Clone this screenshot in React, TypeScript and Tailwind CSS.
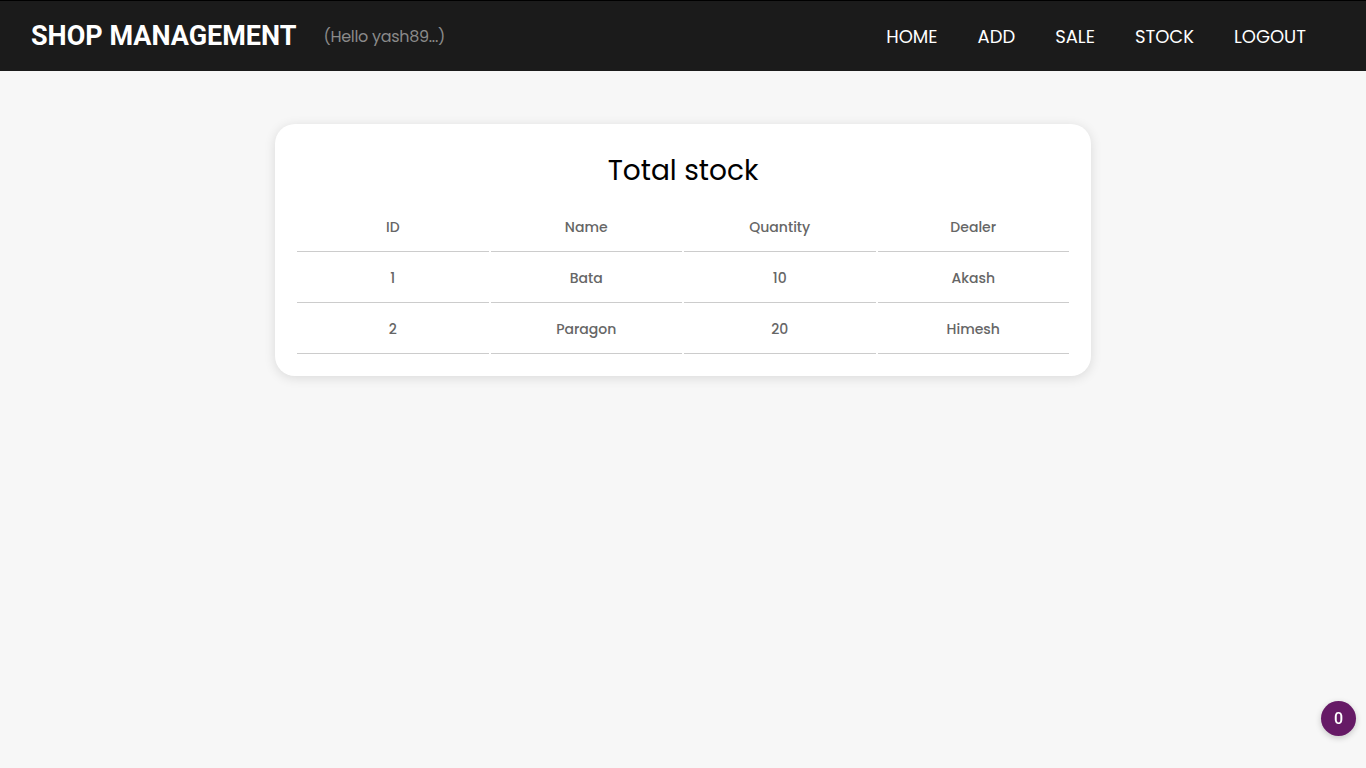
const ROWS = [
  { id: 1, name: "Bata", qty: 10, dealer: "Akash" },
  { id: 2, name: "Paragon", qty: 20, dealer: "Himesh" },
];

const NAV = ["HOME", "ADD", "SALE", "STOCK", "LOGOUT"];

export default function App() {
  return (
    <div className="min-h-screen bg-[#f7f7f7] font-['Poppins','Open_Sans',sans-serif]">
      <nav className="h-[71px] bg-[#1b1b1b] border-t border-black flex items-center pl-[31px] pr-[60px] pt-[1px]">
        <h1 className="font-['Roboto',sans-serif] font-bold text-[27px] text-white">SHOP MANAGEMENT</h1>
        <span className="ml-[27px] text-[16px] text-[#8a8a8a] tracking-[-0.3px]">(Hello yash89...)</span>
        <ul className="ml-auto flex items-center gap-[40px]">
          {NAV.map((n) => (
            <li key={n} className="text-[18px] text-white">{n}</li>
          ))}
        </ul>
      </nav>

      <main className="flex justify-center pt-[53px]">
        <div className="w-[816px] bg-white rounded-[20px] shadow-[0_2px_12px_rgba(0,0,0,0.12)] px-[20px] pt-[27px] pb-[20px]">
          <h2 className="text-center text-[28px] text-black leading-[40px]">Total stock</h2>
          <table className="w-full mt-[12px] border-separate border-spacing-[2px] text-[14px] text-[#666] table-fixed">
            <thead>
              <tr>
                {["ID", "Name", "Quantity", "Dealer"].map((h) => (
                  <th key={h} className="h-[47px] pb-[2px] font-medium text-center border-b border-[#ccc]">{h}</th>
                ))}
              </tr>
            </thead>
            <tbody>
              {ROWS.map((r) => (
                <tr key={r.id}>
                  <td className="h-[49px] font-medium text-center border-b border-[#ccc]">{r.id}</td>
                  <td className="h-[49px] font-medium text-center border-b border-[#ccc]">{r.name}</td>
                  <td className="h-[49px] font-medium text-center border-b border-[#ccc]">{r.qty}</td>
                  <td className="h-[49px] font-medium text-center border-b border-[#ccc]">{r.dealer}</td>
                </tr>
              ))}
            </tbody>
          </table>
        </div>
      </main>

      <div className="fixed right-[10px] bottom-[32px] w-[35px] h-[35px] rounded-full bg-[#661a66] text-white text-[16px] font-medium font-['Roboto',sans-serif] flex items-center justify-center shadow-[0_2px_6px_rgba(0,0,0,0.2)]">
        0
      </div>
    </div>
  );
}
